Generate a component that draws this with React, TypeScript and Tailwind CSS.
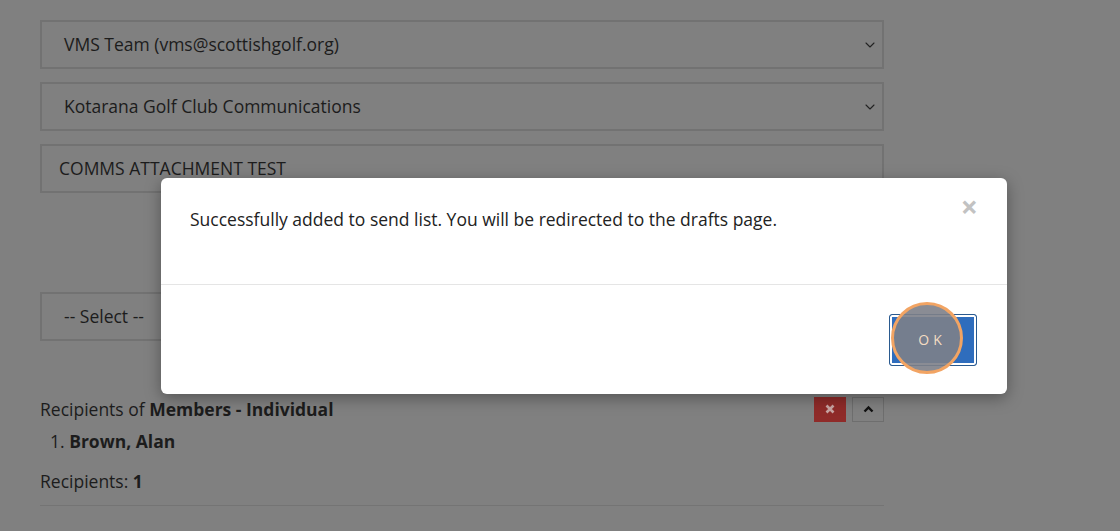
import { ChevronDown } from "lucide-react";

const font = { fontFamily: '"Open Sans", "Liberation Sans", sans-serif' };

const Field: React.FC<{ label: string; select?: boolean; className?: string }> = ({
  label,
  select,
  className,
}) => (
  <div
    className={
      "flex h-[49px] items-center justify-between border-2 border-[#727272] bg-[#808080] pl-[22px] pr-[3px] text-[17.5px] text-[#1c1c1c] " +
      (className ?? "")
    }
  >
    <span>{label}</span>
    {select && <ChevronDown className="mr-[1px] h-4 w-4 text-[#222]" strokeWidth={1.6} />}
  </div>
);

export default function App() {
  return (
    <div className="relative h-[531px] w-[1120px] overflow-hidden bg-[#808080]" style={font}>
      {/* page behind the backdrop */}
      <div className="ml-10 flex w-[844px] flex-col pt-5">
        <Field label="VMS Team (vms@scottishgolf.org)" select />
        <Field label="Kotarana Golf Club Communications" select className="mt-[13px]" />
        <Field label="COMMS ATTACHMENT TEST" className="mt-[13px] !pl-[17px]" />
        <Field label="-- Select --" className="mt-[99px]" />

        <div className="mt-[55px] flex items-center justify-between text-[17.5px] text-[#1c1c1c]">
          <span>
            Recipients of <b>Members - Individual</b>
          </span>
          <div className="flex gap-[6px]">
            <button className="flex h-[25px] w-[32px] items-center justify-center bg-[#8f2b29]">
              <svg width="10" height="10" viewBox="0 0 10 10">
                <path d="M1.5 1.5 L8.5 8.5 M8.5 1.5 L1.5 8.5" stroke="#c8a5a3" strokeWidth="2.6" />
              </svg>
            </button>
            <button className="flex h-[25px] w-[32px] items-center justify-center border border-[#6e6e6e] bg-[#808080]">
              <svg width="11" height="8" viewBox="0 0 11 8">
                <path d="M1.5 6.5 L5.5 2.5 L9.5 6.5" fill="none" stroke="#111" strokeWidth="2.4" />
              </svg>
            </button>
          </div>
        </div>
        <div className="mt-[6px] pl-[10px] text-[17.5px] text-[#1c1c1c]">
          1. <b>Brown, Alan</b>
        </div>
        <div className="mt-[13px] text-[17.5px] text-[#1c1c1c]">
          Recipients: <b>1</b>
        </div>
        <div className="mt-[11px] border-t border-[#747474]" />
      </div>

      {/* modal */}
      <div className="absolute left-[161px] top-[178px] w-[846px] rounded-[6px] bg-white shadow-[0_4px_16px_rgba(0,0,0,0.35)]">
        <div className="relative h-[106px] px-[29px] pt-[28px] text-[17.5px] text-[#222]">
          Successfully added to send list. You will be redirected to the drafts page.
          <span className="absolute right-[29px] top-[14px] text-[30px] font-bold leading-none text-[#c2c2c2]">
            ×
          </span>
        </div>
        <div className="flex h-[110px] items-center justify-end border-t border-[#e5e5e5] pr-[30px]">
          <div className="relative">
            <button className="flex h-[52px] w-[88px] items-center justify-center rounded-[3px] border border-[#2a5a8f] bg-[#2f6dbd] p-0 pr-[2px] shadow-[inset_0_0_0_2px_#fff]">
              <span className="relative z-10 text-[14px] tracking-[4px] text-[#f3dcc2]">OK</span>
            </button>
            <div className="pointer-events-none absolute left-[2px] top-[-12px] h-[72px] w-[72px] rounded-full border-[3px] border-[#f2a463] bg-[#7d8088]/90" />
          </div>
        </div>
      </div>
    </div>
  );
}
